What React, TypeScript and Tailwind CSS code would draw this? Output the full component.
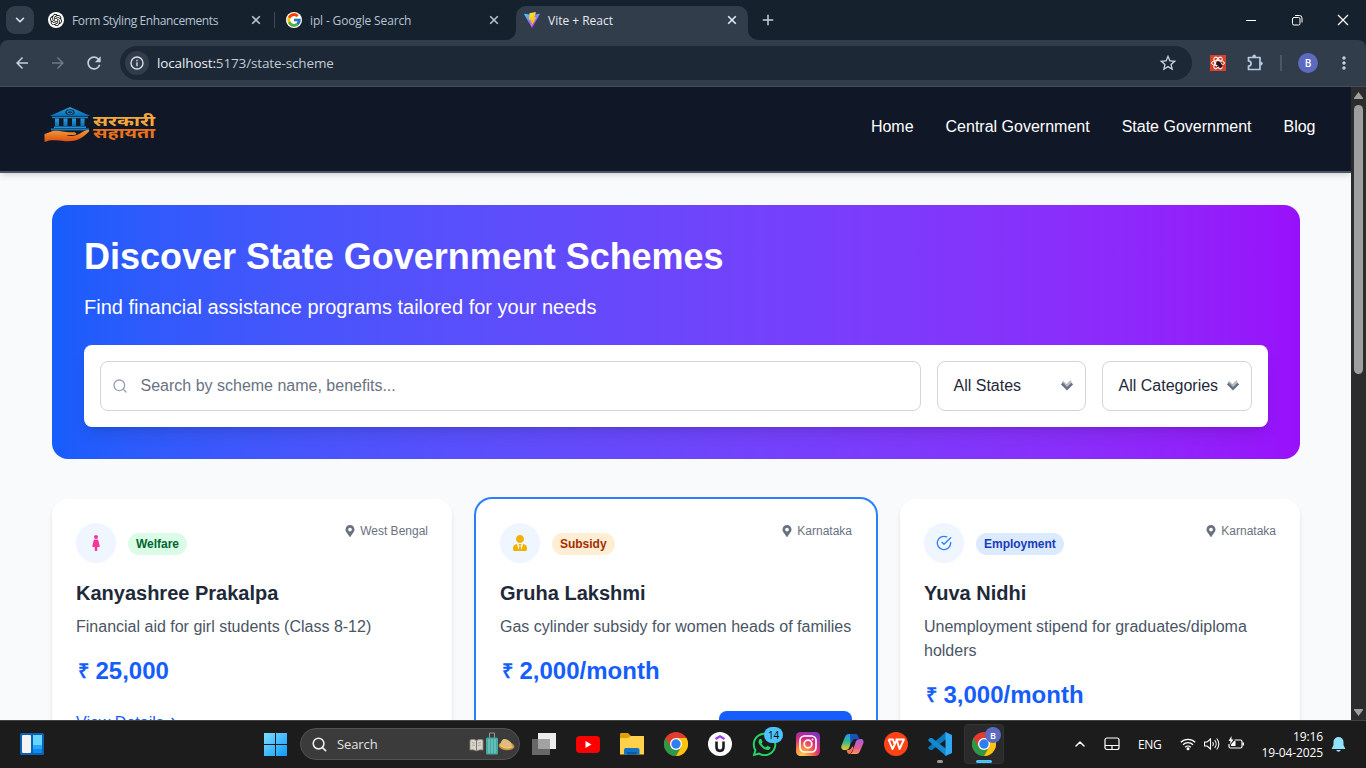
import React from "react";
import { ArrowRight, ChevronDown, ChevronUp } from "lucide-react";
import { FaFemale, FaMapMarkerAlt, FaUserTie, FaWhatsapp } from "react-icons/fa";
import { FiCheckCircle, FiSearch } from "react-icons/fi";
import { FcGoogle } from "react-icons/fc";
import { MdAdd, MdArrowBack, MdArrowForward, MdMoreVert, MdRefresh, MdStarBorder } from "react-icons/md";
import { SiOpenai } from "react-icons/si";

const uiFont = "font-['Open_Sans','Noto_Sans',sans-serif]";

function ChromeLogo() {
  return (
    <svg viewBox="0 0 24 24" className="size-6">
      <circle cx="12" cy="12" r="12" fill="#e33b2e" />
      <path d="M1.6 6 6.8 15 12 18 17.2 15 12 24A12 12 0 0 1 1.6 6Z" fill="#2a9a47" />
      <path d="M12 24 17.2 15 12 6H22.4A12 12 0 0 1 12 24Z" fill="#fdc60a" />
      <circle cx="12" cy="12" r="6" fill="#fff" />
      <circle cx="12" cy="12" r="4.7" fill="#2f7df0" />
    </svg>
  );
}

function ViteLogo() {
  return (
    <svg viewBox="0 0 32 32" className="size-4">
      <defs>
        <linearGradient id="viteA" x1="0" y1="0" x2="0.6" y2="1">
          <stop offset="0" stopColor="#41d1ff" />
          <stop offset="1" stopColor="#bd34fe" />
        </linearGradient>
        <linearGradient id="viteB" x1="0.4" y1="0" x2="0.6" y2="1">
          <stop offset="0" stopColor="#ffea83" />
          <stop offset="0.1" stopColor="#ffdd35" />
          <stop offset="1" stopColor="#ffa800" />
        </linearGradient>
      </defs>
      <path d="M31.4 4.8 16.8 31a.8.8 0 0 1-1.4 0L.6 4.8a.8.8 0 0 1 .8-1.2L16 6.2 30.6 3.6a.8.8 0 0 1 .8 1.2Z" fill="url(#viteA)" />
      <path d="M24 0 11 2.5 10 16 14 15.500 12.800 21.500 15.500 20.500 14.500 29 25 10.500 20.500 11Z" fill="url(#viteB)" />
    </svg>
  );
}

function CloseMark() {
  return (
    <svg className="size-4 shrink-0" viewBox="0 0 16 16" fill="none" stroke="currentColor" strokeWidth="1.6">
      <path d="M4.2 4.2 11.800 11.800M11.800 4.2 4.2 11.800" />
    </svg>
  );
}

function Tab({ icon, title, tracking }: { icon: React.ReactNode; title: string; tracking: string }) {
  return (
    <div className="flex h-10 w-[217px] items-center text-[#b7c3d4]">
      {icon}
      <span className={`ml-2 w-[176px] whitespace-nowrap pt-0.5 text-[12px] ${tracking}`}>{title}</span>
      <CloseMark />
    </div>
  );
}

function Browser() {
  return (
    <div className={`bg-[#15212d] ${uiFont}`}>
      <div className="flex h-10 items-center">
        <div className="ml-1.5 flex size-7 items-center justify-center rounded-[9px] bg-[#323d4c] text-[#dbe2ec]">
          <ChevronDown className="size-3.5" strokeWidth={2.8} />
        </div>
        <div className="ml-3.5 flex">
          <Tab
            icon={
              <span className="flex size-4 items-center justify-center rounded-full bg-white text-black">
                <SiOpenai className="size-3" />
              </span>
            }
            title="Form Styling Enhancements"
            tracking="tracking-[-0.38px]"
          />
        </div>
        <div className="ml-[9px] mr-[11px] h-4 w-px bg-[#3d4a5a]" />
        <div className="w-[220px]">
          <Tab
            icon={
              <span className="flex size-4 items-center justify-center rounded-full bg-white">
                <FcGoogle className="size-4" />
              </span>
            }
            title="ipl - Google Search"
            tracking="tracking-[-0.15px]"
          />
        </div>
        <div className="flex items-end self-end">
          <svg className="size-2.5" viewBox="0 0 10 10">
            <path d="M10 0V10H0A10 10 0 0 0 10 0Z" fill="#323d4c" />
          </svg>
          <div className="flex h-[34px] w-[232px] items-center rounded-t-[10px] bg-[#323d4c] pb-1.5 pl-2 text-[#e3e9f1]">
            <ViteLogo />
            <span className="ml-2 w-[176px] pt-0.5 text-[12px] tracking-[-0.02px]">Vite + React</span>
            <CloseMark />
          </div>
          <svg className="size-2.5" viewBox="0 0 10 10">
            <path d="M0 0V10H10A10 10 0 0 1 0 0Z" fill="#323d4c" />
          </svg>
        </div>
        <MdAdd className="ml-px size-[18px] text-[#c5d0df]" />
        <div className="ml-auto flex text-white">
          <span className="flex w-[46px] items-center justify-center">
            <svg className="size-3" viewBox="0 0 12 12" stroke="currentColor" fill="none">
              <path d="M1 6.5H11" />
            </svg>
          </span>
          <span className="flex w-[46px] items-center justify-center">
            <svg className="size-3" viewBox="0 0 12 12" stroke="currentColor" fill="none">
              <rect x="1.5" y="3.5" width="7.5" height="7.5" rx="1.5" />
              <path d="M4 1.5H8.5A2.5 2.5 0 0 1 11 4V8.5" />
            </svg>
          </span>
          <span className="flex w-[46px] items-center justify-center">
            <svg className="size-3" viewBox="0 0 12 12" stroke="currentColor" strokeWidth="1.2" fill="none">
              <path d="M1 1 11 11M11 1 1 11" />
            </svg>
          </span>
        </div>
      </div>
      <div className="flex h-[47px] items-center rounded-t-lg border-b border-[#464c56] bg-[#323d4c]">
        <MdArrowBack className="ml-[13px] size-[18px] text-[#c5d0df]" />
        <MdArrowForward className="ml-[18px] size-[18px] text-[#6c7787]" />
        <MdRefresh className="ml-[17px] size-5 text-[#c5d0df]" />
        <div className="ml-4 flex h-[34px] w-[1072px] items-center rounded-full bg-[#1c2836] pl-[5px] pr-3.5">
          <span className="flex size-6 items-center justify-center rounded-full bg-[#323d4c]">
            <svg className="size-3.5" viewBox="0 0 14 14" fill="none" stroke="#d5dde8" strokeWidth="1.4">
              <circle cx="7" cy="7" r="6" />
              <path d="M7 6.2V10.3M7 3.7V5.2" />
            </svg>
          </span>
          <span className="ml-2 text-[13.5px] tracking-[-0.13px] text-[#c3c9d1]">
            <span className="text-[#e8edf3]">localhost:</span>5173/state-scheme
          </span>
          <MdStarBorder className="ml-auto size-5 text-[#c5d0df]" />
        </div>
        <svg className="ml-[18px] size-4" viewBox="0 0 16 16">
          <rect width="16" height="16" fill="#d8412f" />
          <g fill="none" stroke="#fff" strokeWidth="1">
            <ellipse cx="8" cy="8" rx="6.5" ry="2.6" />
            <ellipse cx="8" cy="8" rx="6.5" ry="2.6" transform="rotate(60 8 8)" />
            <ellipse cx="8" cy="8" rx="6.5" ry="2.6" transform="rotate(120 8 8)" />
          </g>
          <ellipse cx="9.3" cy="9.5" rx="2" ry="3.6" transform="rotate(-35 9.3 9.5)" fill="#231617" />
          <path d="M6 9 13 11M7 12 12 6.5" stroke="#231617" />
        </svg>
        <svg className="ml-5 size-[18px]" viewBox="0 0 18 18" fill="none" stroke="#b9cbe4" strokeWidth="1.7" strokeLinejoin="round">
          <path d="M2.5 3.5H14V15.5H2.5V12.2A2.6 2.6 0 0 0 2.5 7Z" />
          <path d="M6.7 2.5a1.5 1.5 0 0 1 3 0ZM14.8 8a1.5 1.5 0 0 1 0 3Z" fill="#b9cbe4" strokeWidth="1" />
        </svg>
        <div className="ml-4 h-4 w-0.5 bg-[#4a5767]" />
        <span className="ml-4 flex size-5 items-center justify-center rounded-full bg-[#5c6bc0] text-[10px] font-semibold text-white">B</span>
        <MdMoreVert className="ml-4 size-5 text-[#c5d0df]" />
      </div>
    </div>
  );
}

function Logo() {
  return (
    <div className="flex items-center">
      <svg className="h-[36px] w-[113px]" viewBox="0 0 113 36">
        <defs>
          <linearGradient id="bank" x1="0" y1="0" x2="0" y2="1">
            <stop offset="0" stopColor="#27a0df" />
            <stop offset="1" stopColor="#0b6db5" />
          </linearGradient>
          <linearGradient id="hand" x1="0" y1="0" x2="0" y2="1">
            <stop offset="0" stopColor="#f59b32" />
            <stop offset="1" stopColor="#d94b13" />
          </linearGradient>
        </defs>
        <g fill="url(#bank)">
          <path d="M26 0 46.5 9H5.5Z" />
          <path d="M8 9.8H44V11.2H8Z" />
          <path d="M11 11.5H15V19H11ZM19.5 11.5H23.5V19H19.5ZM28 11.5H32V19H28ZM36.5 11.5H40.5V19H36.5Z" />
          <path d="M10 19.5H42V21H10ZM7 21.5H45V23.5H7Z" />
        </g>
        <ellipse cx="26" cy="5.3" rx="4.6" ry="3" fill="#12324c" />
        <ellipse cx="26" cy="5.3" rx="2.8" ry="1.6" fill="none" stroke="#2792cd" />
        <path d="M0.5 27C5 26 7 23.8 12 23.8C17 23.8 21 25.5 29 25.2C33 25.2 33.5 27.6 30 28H22C27 29.8 32 29 36 26.5C40 24 43 22.5 45 23.3C46 24 43 27 38 30.5C33 34 27 34.6 21 34.2C12 33.3 7 32.5 0.5 35Z" fill="url(#hand)" />
        <g fontFamily="'Noto Sans Devanagari','Noto Sans',sans-serif" fontWeight="700" fontSize="15">
          <text x="49" y="18.500" textLength="62" lengthAdjust="spacingAndGlyphs" fill="#f3a83c">
            सरकारी
          </text>
          <text x="49" y="31" textLength="62" lengthAdjust="spacingAndGlyphs" fill="#e8731d">
            सहायता
          </text>
        </g>
      </svg>
    </div>
  );
}

type Scheme = {
  icon: React.ReactNode;
  tag: string;
  tagClass: string;
  place: string;
  title: string;
  text: string;
  amount: string;
  featured?: boolean;
};

const schemes: Scheme[] = [
  {
    icon: <FaFemale className="size-4 text-[#f6339a]" />,
    tag: "Welfare",
    tagClass: "bg-green-100 text-green-800",
    place: "West Bengal",
    title: "Kanyashree Prakalpa",
    text: "Financial aid for girl students (Class 8-12)",
    amount: "25,000",
  },
  {
    icon: <FaUserTie className="size-4 text-[#f0b100]" />,
    tag: "Subsidy",
    tagClass: "bg-orange-100 text-orange-800",
    place: "Karnataka",
    title: "Gruha Lakshmi",
    text: "Gas cylinder subsidy for women heads of families",
    amount: "2,000/month",
    featured: true,
  },
  {
    icon: <FiCheckCircle className="size-4 text-[#2b7fff]" />,
    tag: "Employment",
    tagClass: "bg-blue-100 text-blue-800",
    place: "Karnataka",
    title: "Yuva Nidhi",
    text: "Unemployment stipend for graduates/diploma holders",
    amount: "3,000/month",
  },
];

function Card({ s }: { s: Scheme }) {
  return (
    <div className={`h-[300px] rounded-2xl bg-white p-6 ${s.featured ? "shadow-md ring-2 ring-blue-500" : "shadow-md"}`}>
      <div className="mb-4 flex items-start justify-between">
        <div className="flex items-center">
          <span className="flex size-10 items-center justify-center rounded-full bg-blue-50">{s.icon}</span>
          <span className={`ml-3 mt-0.5 h-[22px] rounded-full px-2 py-[3px] text-xs font-bold tracking-[-0.02px] ${s.tagClass}`}>{s.tag}</span>
        </div>
        <div className="flex items-center text-xs text-gray-500">
          <FaMapMarkerAlt className="mr-1 size-3" />
          {s.place}
        </div>
      </div>
      <h3 className="mb-2 text-xl font-bold text-gray-800">{s.title}</h3>
      <p className="mb-4 text-gray-600">{s.text}</p>
      <div className="mb-6 flex h-8 items-center text-2xl font-bold text-blue-600">
        <span className="w-[19.5px] pl-0.5 text-[20px]">₹</span>
        {s.amount}
      </div>
      <div className="flex items-start justify-between text-blue-600">
        {!s.featured && (
          <span className="flex items-center">
            View Details
            <ArrowRight className="size-4" />
          </span>
        )}
        {s.featured && <span className="ml-auto h-10 w-[133px] rounded-lg bg-blue-600" />}
      </div>
    </div>
  );
}

function SelectArrow() {
  return (
    <svg className="-mt-0.5 h-[11px] w-3" viewBox="0 0 12 11" fill="none">
      <path d="M1.5 1.500 5.500 5.500 10 1" stroke="#b4bac5" strokeWidth="1.800" />
      <path d="M.8 3.5 6 8.600 11.2 3.5" stroke="#6a7282" strokeWidth="2.7" />
    </svg>
  );
}

function Select({ label, width }: { label: string; width: string }) {
  return (
    <div className={`flex h-[50px] items-center justify-between rounded-lg border border-gray-300 pl-[15.5px] pr-3 text-gray-800 ${width}`}>
      {label}
      <SelectArrow />
    </div>
  );
}

function Page() {
  return (
    <div className="flex h-[633px] bg-[#2c2c2c]">
      <div className="w-[1351px] overflow-hidden bg-gray-50 font-['Liberation_Sans',Arial,sans-serif]">
        <header className="flex h-[86px] items-start justify-between border-b-2 border-[#4a5565] bg-[#101727] pl-11 pr-[35.5px] shadow-md">
          <div className="pt-5">
            <Logo />
          </div>
          <nav className="flex gap-8 pt-7 text-base font-medium text-white">
            <a>Home</a>
            <a>Central Government</a>
            <a>State Government</a>
            <a>Blog</a>
          </nav>
        </header>
        <main className="ml-[52px] mt-8 w-[1248px]">
          <section className="rounded-2xl bg-linear-to-r from-blue-600 to-purple-600 p-8 text-white">
            <h1 className="mb-4 text-4xl font-bold tracking-[-0.02px]">Discover State Government Schemes</h1>
            <p className="mb-6 text-xl">Find financial assistance programs tailored for your needs</p>
            <div className="flex gap-4 rounded-lg bg-white p-4 shadow-lg">
              <div className="flex h-[50px] flex-1 items-center rounded-lg border border-gray-300 pl-[11px] text-[#6a7282]">
                <FiSearch className="mr-[12.5px] size-4 text-gray-400" />
                Search by scheme name, benefits...
              </div>
              <Select label="All States" width="w-[149px]" />
              <Select label="All Categories" width="w-[150px]" />
            </div>
          </section>
          <section className="mt-10 grid grid-cols-3 gap-6">
            {schemes.map((s) => (
              <Card key={s.title} s={s} />
            ))}
          </section>
        </main>
      </div>
      <div className="flex w-[15px] flex-col items-center">
        <svg className="mt-[5px] h-[7px] w-[9px]" viewBox="0 0 9 7">
          <path d="M4.5 0 9 6V7H0V6Z" fill="#9f9f9f" />
        </svg>
        <div className="mt-1.5 h-[269px] w-[9px] rounded-full bg-[#9f9f9f]" />
        <svg className="mb-1 mt-auto h-[7px] w-[9px]" viewBox="0 0 9 7">
          <path d="M4.5 7 9 1V0H0V1Z" fill="#9f9f9f" />
        </svg>
      </div>
    </div>
  );
}

function Cell({ children }: { children: React.ReactNode }) {
  return <div className="flex h-[46px] w-11 items-center justify-center">{children}</div>;
}

function SearchArt() {
  return (
    <svg className="h-6 w-[46px]" viewBox="0 0 46 24">
      <path d="M1 8Q4 6.5 7.5 8.5Q11 6.5 14 8V18Q11 17 7.5 19Q4 17 1 18Z" fill="#d9d5cd" stroke="#8f8577" strokeWidth=".8" />
      <path d="M7.5 8.5V19" stroke="#777" />
      <path d="M3 10.5 6 11M3 13 6 13.5M9 11 12 10.5M9 13.5 12 13" stroke="#a09a90" strokeWidth=".8" />
      <path d="M20.5 6V1H25.5V6" fill="none" stroke="#8d9aa4" />
      <rect x="17" y="5.5" width="12" height="17" rx="1.5" fill="#43aaa3" />
      <path d="M20 7V21M23 7V21M26 7V21" stroke="#8ad3c9" />
      <ellipse cx="37.5" cy="14" rx="8" ry="4.3" transform="rotate(6 37.5 14)" fill="#c08d4e" />
      <path d="M31.5 13C32 7 35 6 38 7.500S43 11 43 14C40 16.5 34 15.5 31.5 13Z" fill="#e2bb80" />
      <path d="M31 13C35 16.500 39 17 43.5 14.500" stroke="#f2cf57" strokeWidth="1.5" fill="none" />
    </svg>
  );
}

function Taskbar() {
  return (
    <div className={`flex h-12 border-t border-[#434343] bg-[#1c1c1c] text-white ${uiFont}`}>
      <div className="flex h-[46px] w-[253px] items-center pl-5">
        <svg className="h-[22px] w-6" viewBox="0 0 24 22">
          <rect width="24" height="22" rx="1.5" fill="#0b62b5" />
          <rect x="2" y="2" width="9" height="18" rx="1" fill="#f3f3f3" />
          <rect x="13" y="2" width="9" height="18" rx="1" fill="#0e8af0" />
          <path d="M13 2H22V12H13Z" fill="#66d6ff" />
          <path d="M13 12H22V16H13Z" fill="#27a9ff" />
        </svg>
      </div>
      <Cell>
        <svg className="size-[23px]" viewBox="0 0 23 23">
          <defs>
            <linearGradient id="win" x1="0" y1="0" x2="1" y2="1">
              <stop offset="0" stopColor="#7fddff" />
              <stop offset="1" stopColor="#0c9bff" />
            </linearGradient>
          </defs>
          <path d="M0 0H11V11H0ZM12 0H23V11H12ZM0 12H11V23H0ZM12 12H23V23H12Z" fill="url(#win)" />
        </svg>
      </Cell>
      <div className="ml-[3px] mr-0.5 mt-[7px] flex h-8 w-[220px] items-center rounded-full border border-[#525252] bg-[#3b3b3b] pl-[11px] pr-[4px]">
        <svg className="size-[15px]" viewBox="0 0 16 16" fill="none" stroke="#ededed" strokeWidth="1.7">
          <circle cx="7" cy="7" r="5.7" />
          <path d="M11 11 15 15" />
        </svg>
        <span className="ml-[10px] pt-0.5 text-[13px] tracking-[-0.1px] text-[#e0e0e0]">Search</span>
        <div className="ml-auto">
          <SearchArt />
        </div>
      </div>
      <Cell>
        <svg className="h-[22px] w-6" viewBox="0 0 24 22">
          <path d="M6 0H24V16H6Z" fill="#ececec" />
          <path d="M0 6H18V22H0Z" fill="#686868" />
          <path d="M6 6H18V16H6Z" fill="#a2a2a2" />
        </svg>
      </Cell>
      <Cell>
        <svg className="h-[17px] w-6" viewBox="0 0 24 17">
          <rect width="24" height="17" rx="4" fill="#f00" />
          <path d="M9.5 5 15.5 8.5 9.5 12Z" fill="#fff" />
        </svg>
      </Cell>
      <Cell>
        <svg className="h-[22px] w-6" viewBox="0 0 24 22">
          <path d="M0 1Q0 0 1 0H8L11 3H24V10H0Z" fill="#e0a100" />
          <path d="M0 5H8L11 3H23Q24 3 24 4V21.5H0Z" fill="#ffd04a" />
          <path d="M4 21.5V17Q4 15 6 15H17.5Q19.5 15 19.5 17V21.5Z" fill="#1173c7" />
          <path d="M7 19H16.5V21.5H7Z" fill="#0d5a9f" />
        </svg>
      </Cell>
      <Cell>
        <ChromeLogo />
      </Cell>
      <Cell>
        <svg className="size-6" viewBox="0 0 24 24" fill="none">
          <circle cx="12" cy="12" r="12" fill="#fff" />
          <path d="M7.5 7 12 4.2 16.5 7" stroke="#a435f0" strokeWidth="2.2" />
          <path d="M8.5 9.5V15C8.5 20.2 15.5 20.2 15.5 15V9.5" stroke="#1c1d1f" strokeWidth="2.6" />
        </svg>
      </Cell>
      <Cell>
        <div className="relative flex size-6 items-center justify-center">
          <FaWhatsapp className="size-[27px] shrink-0 text-[#25d366]" />
          <span className="absolute -right-[7px] -top-[5px] flex h-4 w-[19px] items-center justify-center rounded-full bg-[#4cc2ff] text-[10px] tracking-[-0.2px] text-black">14</span>
        </div>
      </Cell>
      <Cell>
        <svg className="size-6" viewBox="0 0 24 24" fill="none">
          <defs>
            <radialGradient id="insta" cx="0.25" cy="1" r="1.1">
              <stop offset="0" stopColor="#ffd15c" />
              <stop offset="0.35" stopColor="#fa7e3c" />
              <stop offset="0.65" stopColor="#dd2a7b" />
              <stop offset="1" stopColor="#8134bf" />
            </radialGradient>
          </defs>
          <rect width="24" height="24" rx="4.5" fill="url(#insta)" />
          <rect x="4" y="4" width="16" height="16" rx="4.5" stroke="#fff" strokeWidth="1.7" />
          <circle cx="12" cy="12" r="3.8" stroke="#fff" strokeWidth="1.7" />
          <circle cx="16.5" cy="7.5" r="1" fill="#fff" />
        </svg>
      </Cell>
      <Cell>
        <svg className="h-[22px] w-[23px]" viewBox="0 0 23 22">
          <defs>
            <linearGradient id="copA" x1="0" y1="0" x2="0" y2="1">
              <stop offset="0" stopColor="#1c9bea" />
              <stop offset="0.5" stopColor="#38b88a" />
              <stop offset="1" stopColor="#efcb29" />
            </linearGradient>
            <linearGradient id="copB" x1="0" y1="0" x2="0" y2="1">
              <stop offset="0" stopColor="#a65ee0" />
              <stop offset="0.6" stopColor="#e45c96" />
              <stop offset="1" stopColor="#fb9a55" />
            </linearGradient>
          </defs>
          <path d="M4 4Q5 1 8 1H15Q12 1 11 5L8.500 14Q7.500 17 4.500 17H2.5Q-.5 16.5 .5 12.5Z" fill="url(#copA)" />
          <path d="M9 1H15Q17 1 18 6H14Q12 6 11 9L9.5 11Z" fill="#1752be" />
          <path d="M19 18Q18 21 15 21H8Q11 21 12 17L15 8Q16 6 19 6H21Q23 7 22.5 10Z" fill="url(#copB)" />
          <path d="M8 21Q6 20 5.5 17H7Q10 17 11.5 13L12.5 15Q10 21 8 21Z" fill="#f6734d" />
        </svg>
      </Cell>
      <Cell>
        <svg className="size-6" viewBox="0 0 24 24" fill="none" stroke="#fff" strokeWidth="1.9" strokeLinejoin="round">
          <circle cx="12" cy="12" r="12" fill="#ff4316" stroke="none" />
          <path d="M4.5 7.5H9L11 13.5M4.5 7.5 8.5 17 12.8 8 15.5 17 20 7.5H11.5" />
        </svg>
      </Cell>
      <Cell>
        <div className="relative">
          <svg className="size-6" viewBox="0 0 24 24">
            <path d="M18 0V7.2L4 18 2 18 .3 16.5V15.3Z" fill="#0a78bd" />
            <path d="M18 24V16.8L4 6 2 6 .3 7.5V8.7Z" fill="#118ad2" />
            <path d="M17.5 0 24 3V21L17.5 24Z" fill="#2daaf2" />
          </svg>
          <span className="absolute -bottom-[7px] left-[9px] h-[3px] w-1.5 rounded-full bg-[#9a9a9a]" />
        </div>
      </Cell>
      <Cell>
        <div className="relative flex size-10 items-center justify-center rounded border border-[#343434] bg-[#2a2a2a]">
          <ChromeLogo />
          <span className="absolute right-[2px] top-[2px] flex size-4 items-center justify-center rounded-full bg-[#5c6bc0] text-[9px] font-semibold leading-none">B</span>
          <span className="absolute bottom-0 h-[3px] w-4 rounded-full bg-[#4cc2ff]" />
        </div>
      </Cell>
      <div className="ml-auto flex h-[46px] items-center">
        <ChevronUp className="mr-4 size-4" strokeWidth={2.2} />
        <svg className="mr-[18px] size-4" viewBox="0 0 16 16" fill="none" stroke="#fff" strokeWidth="1.2">
          <rect x="1" y="2" width="14" height="11.5" rx="2" />
          <path d="M1 9.5H15M8 9.5V13.5" />
        </svg>
        <span className="mr-[17px] w-[25px] pt-0.5 text-[12px] tracking-[-0.3px]">ENG</span>
        <svg className="mr-2 size-4" viewBox="0 0 16 16" fill="none" stroke="#fff" strokeWidth="1.3">
          <path d="M.8 6.3A10.2 10.2 0 0 1 15.2 6.3M3 8.8A7 7 0 0 1 13 8.8M5.2 11.2A4 4 0 0 1 10.8 11.2" />
          <circle cx="8" cy="12.7" r="1.5" fill="#fff" stroke="none" />
        </svg>
        <svg className="mr-2 size-4" viewBox="0 0 16 16" fill="none" stroke="#fff" strokeWidth="1.1">
          <path d="M.6 6H3.2L6.5 3V13L3.2 10H.6ZM8.7 6A3.3 3.3 0 0 1 8.7 10M10.7 4.2A5.8 5.8 0 0 1 10.7 11.8M12.7 2.5A8.2 8.2 0 0 1 12.7 13.5" />
        </svg>
        <svg className="mr-4 size-4" viewBox="0 0 16 16" fill="none" stroke="#fff" strokeWidth="1.2">
          <path d="M6.5 4H12.5Q14 4 14 5.5V10.5Q14 12 12.5 12H2.5Q1 12 1 10.5V8M15.4 6.5V9.5" />
          <path d="M3.5 0 .5 5H2.5L2 8.5 5.5 3.5H3.5ZM3 10V8.5L6 5H7.5V10Z" fill="#fff" stroke="none" />
        </svg>
        <div className="w-[63px] whitespace-nowrap pt-px text-right text-[12px] leading-4 tracking-[-0.1px]">
          <div>19:16</div>
          <div>19-04-2025</div>
        </div>
        <svg className="ml-2 mr-5 size-[15px]" viewBox="0 0 14 15">
          <path d="M7 0A5 5 0 0 0 2 5V8L.3 11.5V12H13.7V11.5L12 8V5A5 5 0 0 0 7 0ZM4.7 13A2.4 2.4 0 0 0 9.3 13Z" fill="#8fe3ff" />
        </svg>
      </div>
    </div>
  );
}

export default function App() {
  return (
    <div className="h-[768px] w-[1366px] overflow-hidden">
      <Browser />
      <Page />
      <Taskbar />
    </div>
  );
}
